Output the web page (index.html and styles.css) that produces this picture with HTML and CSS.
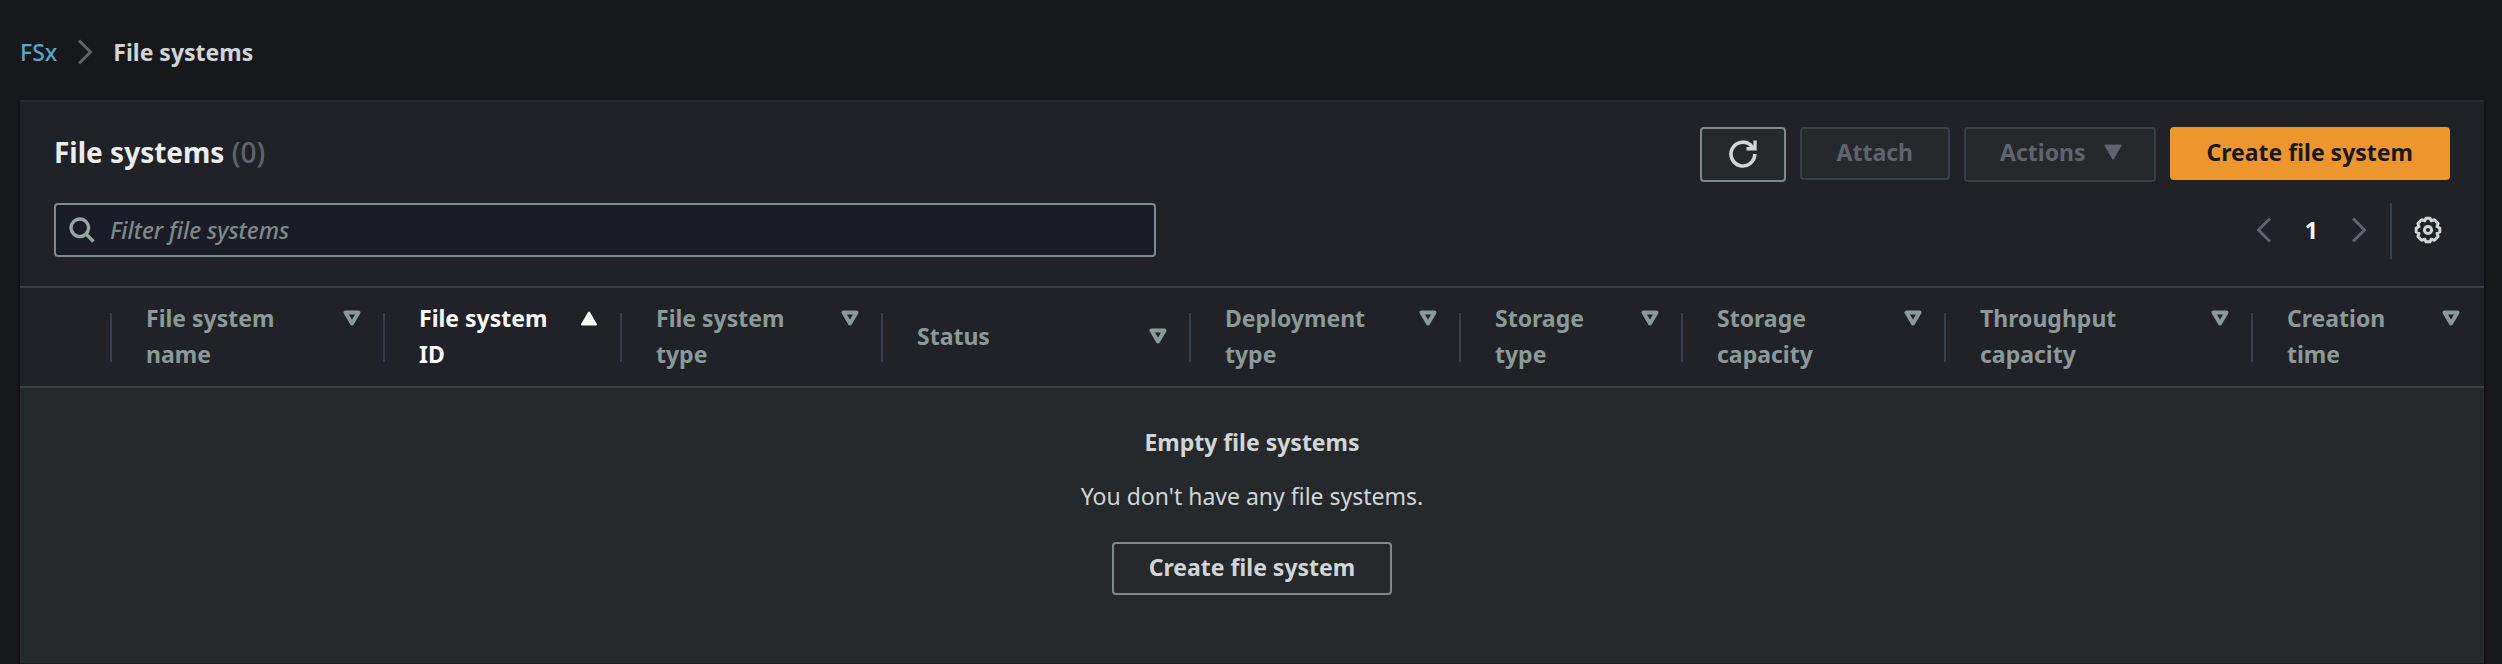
FILE: index.html
```html
<!DOCTYPE html>
<html lang="en">
<head>
<meta charset="utf-8">
<title>File systems</title>
<link rel="stylesheet" href="styles.css">
</head>
<body>
<nav class="breadcrumb" aria-label="Breadcrumb">
  <a class="breadcrumb-link" href="#">FSx</a>
  <svg class="chevron breadcrumb-chevron" viewBox="0 0 16 26" aria-hidden="true"><path d="M2 1.500L13.500 13 2 24.500"/></svg>
  <span class="breadcrumb-current">File systems</span>
</nav>
<main class="panel">
  <header class="panel-header">
    <div class="title-row">
      <h1 class="title">File systems <span class="count">(0)</span></h1>
      <div class="actions">
        <button class="button button-icon" type="button" aria-label="Refresh">
          <svg class="refresh-icon" viewBox="0 0 28 28" aria-hidden="true"><path d="M25.800 14A11.900 11.900 0 1 1 21.500 4.900L24 8" fill="none" stroke="currentColor" stroke-width="3.600"/><path d="M24.400 .5h3.300v10H17.500V7h6.900z" fill="currentColor"/></svg>
        </button>
        <button class="button" type="button" disabled>Attach</button>
        <button class="button button-menu" type="button" disabled>Actions
          <svg class="menu-caret" viewBox="0 0 18 16" aria-hidden="true"><path d="M1.500 1.500h15L9 14.500z" fill="currentColor" stroke="currentColor" stroke-width="2" stroke-linejoin="round"/></svg>
        </button>
        <button class="button button-primary" type="button">Create file system</button>
      </div>
    </div>
    <div class="tools-row">
      <label class="search">
        <svg class="search-icon" viewBox="0 0 26 26" aria-hidden="true"><circle cx="10.800" cy="10.800" r="8.800"/><path d="M17 17l7.500 7.500"/></svg>
        <input class="search-input" type="text" placeholder="Filter file systems" aria-label="Filter file systems">
      </label>
      <div class="pagination">
        <button class="plain-button" type="button" aria-label="Previous page" disabled><svg class="chevron" viewBox="0 0 16 26" aria-hidden="true"><path d="M14 1.500L2.500 13 14 24.500"/></svg></button>
        <button class="plain-button page-number" type="button" aria-current="page">1</button>
        <button class="plain-button" type="button" aria-label="Next page" disabled><svg class="chevron" viewBox="0 0 16 26" aria-hidden="true"><path d="M2 1.500L13.500 13 2 24.500"/></svg></button>
        <div class="settings">
          <button class="plain-button" type="button" aria-label="Preferences">
            <svg class="gear-icon" viewBox="0 0 28 28" aria-hidden="true"><path d="M12 2.200h4l1.200 2.600 3.200-1 3.700 3.700-1.100 3.200 2.800 1.300v4l-2.800 1.300 1.100 3.200-3.700 3.700-3.200-1-1.200 2.600h-4l-1.200-2.600-3.200 1-3.700-3.700L5 17.300 2.200 16v-4L5 10.700 3.900 7.500l3.700-3.700 3.200 1z"/><circle cx="14" cy="14" r="3.600"/></svg>
          </button>
        </div>
      </div>
    </div>
  </header>
  <table class="table">
    <colgroup>
      <col class="col-select"><col class="col-name"><col class="col-id"><col class="col-type"><col class="col-status"><col class="col-deployment"><col class="col-storage-type"><col class="col-storage-capacity"><col class="col-throughput"><col class="col-created">
    </colgroup>
    <thead>
      <tr>
        <td class="heading"></td>
        <th class="heading" scope="col"><button class="sort" type="button"><span>File system<br>name</span><svg class="caret" viewBox="0 0 18 16" aria-hidden="true"><path d="M2.500 2.500h13L9 13.500z"/></svg></button></th>
        <th class="heading" scope="col" aria-sort="ascending"><button class="sort sort-active" type="button"><span>File system<br>ID</span><svg class="caret" viewBox="0 0 18 16" aria-hidden="true"><path d="M2 14.500h14L9 2.500z"/></svg></button></th>
        <th class="heading" scope="col"><button class="sort" type="button"><span>File system<br>type</span><svg class="caret" viewBox="0 0 18 16" aria-hidden="true"><path d="M2.500 2.500h13L9 13.500z"/></svg></button></th>
        <th class="heading" scope="col"><button class="sort" type="button"><span>Status</span><svg class="caret" viewBox="0 0 18 16" aria-hidden="true"><path d="M2.500 2.500h13L9 13.500z"/></svg></button></th>
        <th class="heading" scope="col"><button class="sort" type="button"><span>Deployment<br>type</span><svg class="caret" viewBox="0 0 18 16" aria-hidden="true"><path d="M2.500 2.500h13L9 13.500z"/></svg></button></th>
        <th class="heading" scope="col"><button class="sort" type="button"><span>Storage<br>type</span><svg class="caret" viewBox="0 0 18 16" aria-hidden="true"><path d="M2.500 2.500h13L9 13.500z"/></svg></button></th>
        <th class="heading" scope="col"><button class="sort" type="button"><span>Storage<br>capacity</span><svg class="caret" viewBox="0 0 18 16" aria-hidden="true"><path d="M2.500 2.500h13L9 13.500z"/></svg></button></th>
        <th class="heading" scope="col"><button class="sort" type="button"><span>Throughput<br>capacity</span><svg class="caret" viewBox="0 0 18 16" aria-hidden="true"><path d="M2.500 2.500h13L9 13.500z"/></svg></button></th>
        <th class="heading" scope="col"><button class="sort" type="button"><span>Creation<br>time</span><svg class="caret" viewBox="0 0 18 16" aria-hidden="true"><path d="M2.500 2.500h13L9 13.500z"/></svg></button></th>
      </tr>
    </thead>
    <tbody>
      <tr>
        <td class="empty" colspan="10">
          <div class="empty-content">
            <strong>Empty file systems</strong>
            <p class="empty-text">You don't have any file systems.</p>
            <button class="button" type="button">Create file system</button>
          </div>
        </td>
      </tr>
    </tbody>
  </table>
</main>
</body>
</html>
```
FILE: styles.css
```css
* {
  box-sizing: border-box;
}

body {
  margin: 0;
  padding: 34px 18px 0 20px;
  background: #17181c;
  color: #d1d5d6;
  font: 23px/36px "Noto Sans", sans-serif;
}

button,
input {
  font: inherit;
}

svg {
  display: block;
  flex: none;
}

.breadcrumb {
  display: flex;
  align-items: center;
  gap: 20px;
  padding-bottom: 30px;
}

.breadcrumb-link {
  color: #56a9cb;
  font-weight: 500;
  text-decoration: none;
}

.breadcrumb-current {
  font-weight: 700;
}

.chevron {
  width: 16px;
  height: 26px;
  fill: none;
  stroke: #5f646c;
  stroke-width: 3;
}

.panel {
  border-top: 2px solid #26282d;
  border-bottom: 1px solid #1d1e22;
  background: #212227;
  box-shadow: 0 1px 3px #0d0e11;
}

.panel-header {
  padding: 25px 34px 27px;
}

.title-row,
.tools-row {
  display: flex;
  align-items: flex-start;
  justify-content: space-between;
}

.title {
  margin: 0;
  color: #ebeced;
  font-size: 28px;
  line-height: 50px;
}

.count {
  color: #60656d;
  font-weight: 500;
}

.actions {
  display: flex;
  align-items: flex-start;
  gap: 14px;
}

.button {
  display: flex;
  align-items: center;
  gap: 18px;
  min-height: 53px;
  padding: 0 35px 3px;
  border: 2px solid #7f898a;
  border-radius: 4px;
  background: #25292c;
  color: #d1d5d6;
  font-weight: 700;
  white-space: nowrap;
}

.button:disabled {
  border-color: #3a3e46;
  color: #5f646c;
}

.button-icon {
  min-height: 55px;
  padding: 0 27px 2px;
}

.button-menu {
  min-height: 55px;
  padding: 0 32px 5px 34px;
}

.button-primary {
  border-color: #ee962e;
  background: #ee962e;
  color: #17181c;
}

.refresh-icon,
.gear-icon {
  width: 28px;
  height: 28px;
}

.menu-caret,
.caret {
  width: 18px;
  height: 16px;
}

.tools-row {
  padding-top: 21px;
}

.search {
  display: flex;
  align-items: center;
  gap: 15px;
  width: 46%;
  height: 54px;
  padding: 0 13px 1px;
  border: 2px solid #7f898a;
  border-radius: 4px;
  background: #1a1d25;
}

.search-icon {
  width: 26px;
  height: 26px;
  fill: none;
  stroke: #98a4a4;
  stroke-width: 3.4;
}

.search-input {
  flex: 1;
  min-width: 0;
  padding: 0;
  border: 0;
  outline: 0;
  background: transparent;
  color: #d1d5d6;
}

.search-input::placeholder {
  color: #7f898a;
  font-style: italic;
  font-weight: 500;
  opacity: 1;
}

.pagination {
  display: flex;
  align-items: center;
  gap: 33px;
}

.plain-button {
  padding: 0 0 2px;
  border: 0;
  background: none;
  color: #d1d5d6;
}

.page-number {
  color: #fafafa;
  font-weight: 700;
}

.settings {
  display: flex;
  align-items: center;
  height: 56px;
  margin-left: -10px;
  padding: 0 8px 0 22px;
  border-left: 2px solid #3a3e46;
}

.gear-icon {
  fill: none;
  stroke: currentColor;
  stroke-width: 3;
  stroke-linejoin: round;
}

.table {
  width: 100%;
  border-collapse: collapse;
  table-layout: fixed;
}

.col-select { width: 92px; }
.col-name { width: 273px; }
.col-id { width: 237px; }
.col-type { width: 261px; }
.col-status { width: 308px; }
.col-deployment { width: 270px; }
.col-storage-type { width: 222px; }
.col-storage-capacity { width: 263px; }
.col-throughput { width: 307px; }
.col-created { width: 231px; }

.heading {
  position: relative;
  padding: 12px 24px 14px 34px;
  border-top: 2px solid #3a3e46;
  border-bottom: 2px solid #3a3e46;
}

.heading:not(:last-child)::after {
  position: absolute;
  top: 25px;
  right: 0;
  bottom: 24px;
  width: 2px;
  background: #3a3e46;
  content: "";
}

.sort {
  display: flex;
  align-items: flex-start;
  justify-content: space-between;
  width: 100%;
  padding: 0;
  border: 0;
  background: none;
  color: #8c9999;
  font-weight: 700;
  text-align: left;
}

.caret {
  margin-top: 10px;
  fill: none;
  stroke: currentColor;
  stroke-width: 4;
  stroke-linejoin: round;
}

.sort-active {
  color: #fafafa;
}

.sort-active .caret {
  fill: currentColor;
  stroke-width: 2;
}

.empty {
  padding: 36px 34px 68px;
  background: #25292c;
}

.empty-content {
  display: flex;
  flex-direction: column;
  align-items: center;
}

.empty-text {
  margin: 18px 0 28px;
}
```
